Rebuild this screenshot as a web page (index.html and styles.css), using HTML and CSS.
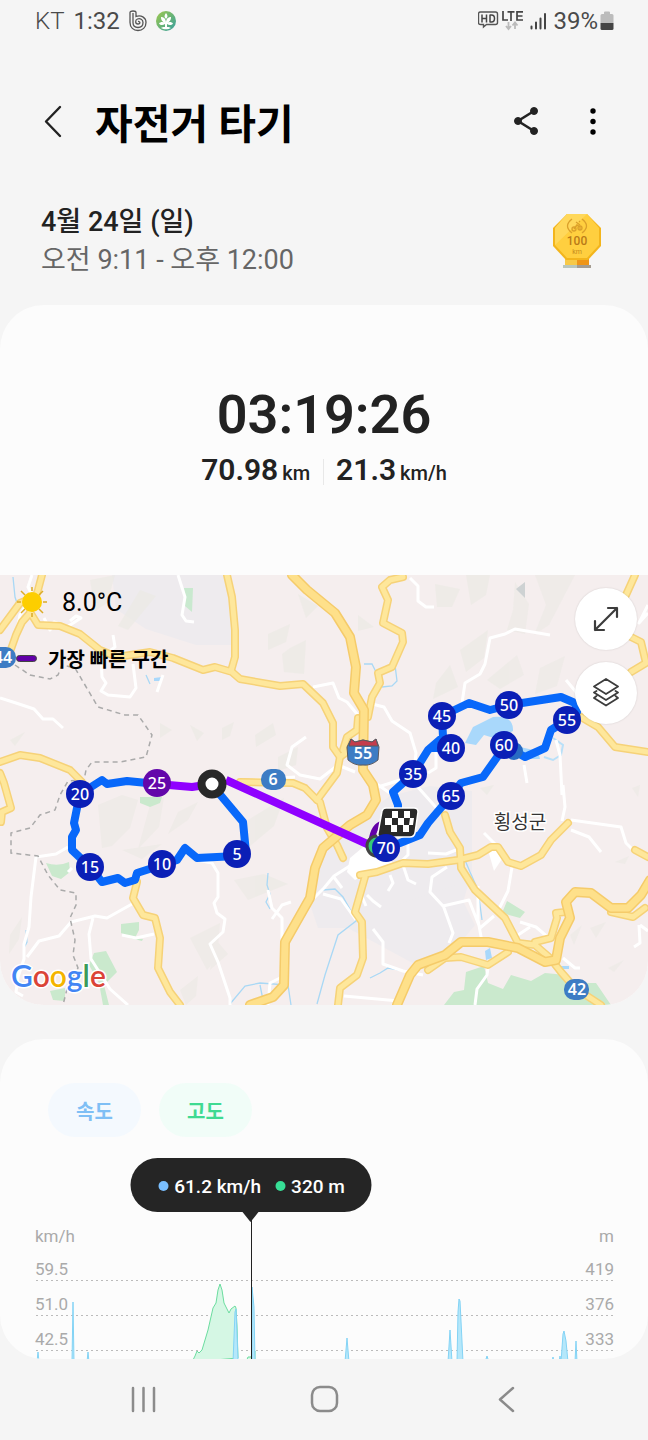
FILE: index.html
```html
<!DOCTYPE html>
<html lang="ko">
<head>
    <meta charset="UTF-8">
    <meta name="viewport" content="width=device-width, initial-scale=1.0">
    <title>자전거 타기</title>
    <link rel="stylesheet" href="styles.css">
</head>
<body>
    <div class="status-bar">
        <div class="status-left">
            <span class="carrier">KT</span>
            <span>1:32</span>
            <svg class="status-b" width="18" height="22" viewBox="0 0 18 22" fill="none" stroke="#555" stroke-width="1.3">
                <path d="M1 2.500c0-2 6-2 6 0v4c5-2 10 1 10 6 0 5-3.500 8-8 8s-8-3-8-8z"/>
                <path d="M4 3v9.500c0 3 2 5 5 5s5-2 5-5-3-4.500-5.500-3.500-2.500 5 .5 5 2-3 0-2.500"/>
            </svg>
            <svg width="20" height="20" viewBox="0 0 20 20">
                <defs>
                    <linearGradient id="leaf" x1="0" y1="0" x2="1" y2="1">
                        <stop offset="0" stop-color="#9fc94b"/>
                        <stop offset="1" stop-color="#359fa0"/>
                    </linearGradient>
                </defs>
                <circle cx="10" cy="10" r="10" fill="url(#leaf)"/>
                <path fill="#fff" d="M10 2c2 2.500 2 4 0 6-2-2-2-3.500 0-6zM10 12c0-4 2-6 5-6 .3 3-1.500 5-4 6 2-1.500 4.500-1.500 6 .5-1.500 2-4 2-6 .5v3c2 0 3 .5 4 1-3 1.800-7 1.800-10 0 1-.7 2-1 4-1v-3c-2 1.500-4.500 1.500-6-.5 1.500-2 4-2 6-.5-2.500-1-4.300-3-4-6 3 0 5 2 5 6z"/>
            </svg>
        </div>
        <div class="status-right">
            <svg width="46" height="22" viewBox="0 0 46 22">
                <path d="M2.500 2h15q2 0 2 2v8.500q0 2-2 2H8.500L5.500 17v-2.500h-3q-2 0-2-2V4q0-2 2-2z" fill="none" stroke="#555" stroke-width="1.400"/>
                <path d="M4 4.500v8M8.500 4.500v8M4 8.500h4.500M12 4.500v8M12 5h1.500q3 0 3 3.500t-3 3.500H12" fill="none" stroke="#444" stroke-width="1.500"/>
                <path d="M25 1v9h5M29.500 1.800h7M33 1.800V11M45 1.800h-6v8.200h6M39 6h5.500" fill="none" stroke="#444" stroke-width="1.700"/>
                <path d="M30.500 12v6M28 16l2.500 3 2.500-3M37 19v-6M34.500 15.500L37 12.500l2.500 3" fill="none" stroke="#bbb" stroke-width="1.800"/>
            </svg>
            <svg width="17" height="22" viewBox="0 0 17 22" stroke="#444" stroke-width="2" stroke-linecap="round">
                <path d="M1.500 16.500v2M6 12.500v6M10.500 8.500v10M15 4v14.500"/>
            </svg>
            <span class="battery-text">39%</span>
            <svg width="14" height="20" viewBox="0 0 14 20">
                <path d="M4 1.500q0-1 1-1h4q1 0 1 1V3h2q1.500 0 1.500 1.500V12H.5V4.500Q.5 3 2 3h2z" fill="#bcbcbc"/>
                <path d="M.5 12h13v5.500q0 1.500-1.500 1.500H2Q.5 19 .5 17.500z" fill="#444"/>
            </svg>
        </div>
    </div>

    <header class="app-bar">
        <button class="icon-btn" aria-label="뒤로">
            <svg width="20" height="34" viewBox="0 0 20 34" fill="none" stroke="#222" stroke-width="2.400" stroke-linecap="round" stroke-linejoin="round"><path d="M16 2L2 16.500 16 31"/></svg>
        </button>
        <h1>자전거 타기</h1>
        <button class="icon-btn" aria-label="공유">
            <svg width="26" height="30" viewBox="0 0 26 30" fill="#222" stroke="#222">
                <path d="M21 4L5 14l16 10" fill="none" stroke-width="2.600"/>
                <circle cx="21" cy="4" r="3.500"/><circle cx="5" cy="14" r="3.500"/><circle cx="21" cy="24" r="3.500"/>
            </svg>
        </button>
        <button class="icon-btn more" aria-label="더보기">
            <svg width="8" height="30" viewBox="0 0 8 30"><circle cx="4" cy="4" r="2.700"/><circle cx="4" cy="14.500" r="2.700"/><circle cx="4" cy="25" r="2.700"/></svg>
        </button>
    </header>

    <section class="summary">
        <div>
            <p class="date">4월 24일 (일)</p>
            <p class="period">오전 9:11 - 오후 12:00</p>
        </div>
        <svg class="badge" width="50" height="56" viewBox="0 0 50 56">
            <path d="M13 46h24v7H13z" fill="#f7c948"/><path d="M25 46h12v7H25z" fill="#ef9518"/>
            <path d="M11 52h14v3H11z" fill="#b9c6bd"/><path d="M25 52h14v3H25z" fill="#a49c91"/>
            <path d="M15 1h20l14 14v18L36 47H14L1 33V15z" fill="#f3b51c"/>
            <path d="M15 1h20l12 14v17L35 45H15L3 32V15z" fill="#ffcf3f"/>
            <path d="M15 1h20L3 32V15z" fill="#ffdc68" opacity=".7"/>
            <g fill="none" stroke="#dba02b" stroke-width="1.300">
                <path d="M20 6q-9 7 0 14M30 6q9 7 0 14"/>
                <path d="M22 16l3-4 3 2v3M24 9l4 3M27 8l1 1"/>
                <circle cx="22" cy="16" r="2"/><circle cx="28" cy="15" r="2"/>
            </g>
            <text x="25" y="32" font-size="12" font-weight="500" text-anchor="middle" fill="#b97a18">100</text>
            <text x="25" y="41" font-size="7" text-anchor="middle" fill="#c58b20">km</text>
        </svg>
    </section>

    <main>
        <section class="card">
            <div class="totals">
                <p class="duration">03:19:26</p>
                <div class="metrics">
                    <p><span>70.98</span><small>km</small></p>
                    <p><span>21.3</span><small>km/h</small></p>
                </div>
            </div>

            <div class="map">
                <svg class="map-canvas" viewBox="0 575 648 430">
                    <rect y="575" width="648" height="430" fill="#f5eeee"/>

                    <!-- terrain -->
                    <g fill="#eeebee">
                        <path d="M112 575h118l6 70-40 0-50-16-30-20z"/>
                        <path d="M322 850l28-24 40-30 40-10 42 5 0 80-20 70-34 25-70-38-30 0-10-30z"/>
                        <path d="M395 905l60-20 20 40-25 30-40-5z"/>
                    </g>
                    <g fill="#ebeae4" opacity=".6">
                        <path d="M90 580l25-5-8 28-12 8zM140 590l16 6-28 34-10-4zM290 648l16-8-2 34-20-2-2-18zM268 634l22-10-4 18-18 8zM298 594l20 12-12 12zM358 615l16 12-16 4z"/>
                        <path d="M435 584l25 5-8 18-15 0zM466 575h24l-4 20-15 10zM515 582l14 22-4 30-18-4 6-20zM535 575h40l-26 50-15 10 12-30zM460 650l28-20-4 28-18 14zM487 680l30-25 7 20-24 14zM540 668l25-12-8 30-22 8zM436 683l14-18 8 22-25 12z"/>
                        <path d="M10 740l15-8-10 14zM160 723l12 7-12 8zM190 725l14 8-7 8zM255 735l18-12 3 12-20 12zM222 728l12-6-4 14-8 4zM278 757l20-10-2 18-18 6z"/>
                        <path d="M98 805l24-10 16 5-8 28-18 18-10 2zM150 805l14-8-5 30-21 22zM178 812l20-10-10 18-20 14zM122 850l40-6-20 15zM248 820l36-22-10 28-36 30zM234 880l30-6 24 10-40 16zM10 935l12-18-3 22-10 15zM190 938l30-15-3 35-10 12zM180 990l18-14-2 20-10 9zM216 940l12 14-18 16z"/>
                        <path d="M480 788l14-3-7 10zM615 862l14-6-4 8zM590 928l16-6-10 16zM570 935l12-10-8 20zM608 968l16-8-10 12zM632 788l8-3-2 12z"/>
                    </g>
                    <path d="M516 589l9-7v16z" fill="#ced2d3"/>
                    <path d="M184 588l9 0-1 24-7-6z" fill="#c9e9cf"/>
                    <g fill="#cae9cd">
                        <path d="M46 863q12 4 23-1l1 10-9 7-9-3zM140 797h22l-2 6-10 4-10-4zM121 924l18-2 0 8-4 8 8 1-1 2-12-3-9-5zM94 953l12-2 11 21-13 13 5 20h-6l-4-22-10-18zM50 991l15-3 0 13-12-1zM507 901l18 11-5 6-18-5z"/>
                        <path d="M444 1005l10-13 10-2 2-18 18-6 4 17 15 6 8-14 20 6 14-8 21 2 10 8 20 0 15 22z"/>
                    </g>
                    <g fill="#a9d8fb">
                        <path d="M473 727l20-10q21-2 20 14l-16 8-13-4-8 10-11-2zM520 747l18 4 2 8-20 0z"/>
                        <path d="M485 951l5-3 2 10-6 2zM561 966h8v3h-8zM154 678l8-1-2 4h-6z"/>
                    </g>
                    <path d="M553 738l10 7-2 10-8 5-9-3" fill="none" stroke="#b9e0f8" stroke-width="2"/>
                    <g fill="none" stroke="#a9d8f5" stroke-width="1.300">
                        <path d="M13 577l2 20 4 12M364 664l8 0 4 8M395 665l2 16-5 5-10 1M146 675l4 9M268 873l-1 12 3 9-4 8 4 7M323 890l12-1 8 8 8 14 5 10-18 14-13 40-8 29M230 1004l15-18 15-3 28 2 3 20M260 985l3 15M26 930l1 12-3 6M465 860l5 12 8 18 4 30M370 978l10-5 8-5 12 2"/>
                    </g>

                    <!-- minor roads -->
                    <g class="road-minor">
                        <path d="M32 575l-4 12 4 8-12 20-3 15M44 618l6 12 4-8 13 5 14-9-5-2-6 5M178 575l7 22-3 18 4 6 8 1"/>
                        <path d="M0 698l16 5 18 6 9 10 10 0 10 9M113 635l2 12-14 10 1 20 4 6-5 8 7 4 22 2 6-9-3-24M163 675l-6 17"/>
                        <path d="M313 687l20-4 6 15 8 4 15 18M372 704l12 3 8 14 18 12 6 20-2 17-14 10-25 8M306 737l-14 10-5 18 13 10 20 4 18-14 17 7M250 780l45-3M410 578l8 8 0 15 8 6h8M462 703l3-20 15-9 5-10 5-26 15-4 10-5 35 6M566 680l10 12 4 12M648 605l-9 18 9-10"/>
                        <path d="M36 857l20-3 12-7M36 857l-5 40-2 30-5 17 0 15-6 18-2 15 7 4M27 957l12-16 20-5 12-14 24-6 12 2 25-14M93 918l-4 16 2 25 14 22 5 8 18 16M122 935l14 3 18-4M72 868l-4 4M197 860l15 3 6 10 0 24-4 6 3 10 8 6-2 13-13 12 8 18 12 36 0 7M268 890l4 18 10 10 0 60M272 919l10-14 9-3M268 1005l2-22 12-6"/>
                        <path d="M306 906l18-18 10-12 22-14M356 920l-15-21-18-5M333 876l9 12M376 873l-12 4-4 15 6 14M367 895l6 6 8 6M373 929l10 13 0 22 20 7 20 4M344 996l55 5M390 875l3 8-5 8M403 865l5 15 8 4M398 864l10-9 0-20"/>
                        <path d="M447 867l-15 10-2 15 13 14 26-6 11 28 14-12M443 905l10 28-4 10M478 886l0 34 4 22M512 867l-4 24-10 20M520 922l16 5 14 12M518 935l12-8M489 960l-2 15-10 14-2 16M428 853l18 1 10-4M484 833l12 12M563 785l2 22-3 14M571 820l50 7 5 16 6 6M571 830l18 7 12 15M639 925l1 18-6 4M640 925l8 6M563 958l12 10 5 0M556 740l4 15 2 40M524 765l3 18M436 750l0 18-8 5M416 785l25 28M374 782l20 14"/>
                    </g>
                    <path d="M350 858l18-15 20 15 10 10-28 4-15 8-8-8zM488 850l10-3 4 12-8 12z" fill="#fff"/>

                    <path class="border" d="M15 665L30 675 50 679 58 675 62 665 75 668 85 685 98 707 125 715 138 715 152 735 146 757 120 762 92 762 86 770 84 780 68 781 60 795 55 810 40 815 30 828 11 833 11 853 38 856 48 875 60 890 76 893 76 905 70 918 75 940 73 955 78 968 68 985 63 1005"/>

                    <!-- main roads: outline, then fill -->
                    <defs>
                        <g id="roads">
                            <path d="M0 630L20 603 32 598M42 575L38 590 33 605M30 613L22 622 16 635 10 652M30 612L38 625 60 626 80 634 100 650 117 657 150 652 173 658 203 670 215 667 232 672 240 679 280 686 303 684 323 703 333 723 333 747 340 757 337 773 317 800"/>
                            <path d="M340 757L347 752M343 750L347 737 357 730 358 718M227 575L232 597 235 630 235 657 231 671M403 577L390 580 382 587 388 600 383 623 402 633 403 642 392 667 378 673 380 683 372 697 368 717"/>
                            <path d="M240 782L293 783 305 788 317 800 320 802 327 828 337 845 343 858M360 875L377 872 403 863 428 864 458 860 478 855 491 847 498 847 508 862 521 866 541 855 551 840 568 823"/>
                            <path d="M365 877L355 912 362 922 363 958 357 975 340 988 338 1005M445 815L450 832 460 848 461 868 475 890 505 918 518 943 535 945 550 958 561 972 575 988 601 1005"/>
                            <path d="M428 970L445 958 461 957 488 965 508 952M535 942L551 938 557 918 556 913 565 912M611 912L633 917 645 908M635 850L648 857M635 575L626 595M631 637L641 642 646 663 631 672M581 717L598 727 615 747 648 752"/>
                            <path d="M0 762L20 755 40 758 70 770 82 782M0 773L4 783 11 808 2 812 1 822M137 882L133 898 143 915 155 918 160 938 158 968 170 992 180 1005"/>
                        </g>
                        <g id="highways">
                            <path d="M292 575L307 590 335 613 350 637 356 667 354 693 364 710 363 770 373 785 376 800 367 815 350 825 323 848 315 868 310 898 285 942 284 985 273 997 250 1005"/>
                            <path d="M397 1005L410 975 418 965 445 955 461 942 488 942 518 948 545 962 556 960 560 938 570 918 566 902 575 892 591 893 611 908 628 908 641 895 650 880"/>
                        </g>
                    </defs>
                    <use href="#roads" class="road-edge"/>
                    <use href="#roads" class="road-fill"/>
                    <use href="#highways" class="highway-edge"/>
                    <use href="#highways" class="highway-fill"/>

                    <!-- road numbers -->
                    <g class="shield">
                        <rect x="-10" y="647" width="26" height="21" rx="10"/><text x="3" y="663">44</text>
                        <rect x="261" y="769" width="25" height="21" rx="10"/><text x="273" y="785">6</text>
                        <rect x="564" y="979" width="25" height="21" rx="10"/><text x="577" y="995">42</text>
                        <path d="M351 739l4 3 8-2 9 2 4-3 3 8-1 13q-7 6-15 5-8 1-15-5l-1-13z" stroke="#5b5a60"/>
                        <path d="M351 739l4 3 8-2 9 2 4-3 2 7h-29z" fill="#c43c4c" stroke="#5b5a60"/>
                        <text x="363" y="759">55</text>
                    </g>
                    <text class="place" x="520" y="829">횡성군</text>

                    <!-- ride -->
                    <g class="route">
                        <path d="M212 785L243 822 246 853 237 856 197 858 185 848 177 860 162 865 137 873 135 880 125 883 118 878 102 882 90 867 72 850 72 837 76 830 74 823 77 808 80 794 102 780 107 784 127 781 157 784"/>
                        <path d="M398 812L398 805 393 792 413 774 428 750 443 737 442 716 469 703 490 710 509 705 561 697 575 703 577 712 567 720 551 730 545 748 525 757 505 746 483 777 461 783 451 796 428 823 420 835 400 843 386 848M430 748L451 748 455 760"/>
                        <path class="fastest" d="M157 784L192 787 212 784M226 780L376 848"/>
                    </g>
                    <circle cx="514" cy="751" r="9" fill="#286bc3"/>
                    <path d="M371 846q1-18 10-22" fill="none" stroke="#6200a8" stroke-width="6"/>
                    <circle cx="377" cy="846" r="10" fill="#35c978" stroke="#444" stroke-width="3"/>
                    <g transform="translate(379 807)">
                        <path d="M3 4q1-3 4-3h28q4 0 4 4l-3 21q-1 4-5 4H2q-4 0-3-4z" fill="#292929" stroke="#fff" stroke-width="1.500"/>
                        <path d="M13 4h6v7h-6zM25 4h6v7h-6zM6 11h7v7H6zM19 11h6v7h-6zM31 11h4l-1 7h-4zM12 18h6v7h-6zM24 18h6v7h-6z" fill="#fff"/>
                    </g>
                    <circle cx="212" cy="784" r="10.500" fill="#fff" stroke="#292929" stroke-width="8"/>
                    <g class="pins">
                        <circle cx="237" cy="854" r="14"/><text x="237" y="860">5</text>
                        <circle cx="162" cy="864" r="14"/><text x="162" y="870">10</text>
                        <circle cx="90" cy="867" r="14"/><text x="90" y="873">15</text>
                        <circle cx="80" cy="794" r="14"/><text x="80" y="800">20</text>
                        <circle cx="157" cy="783" r="14" fill="#6307aa"/><text x="157" y="789">25</text>
                        <circle cx="413" cy="774" r="14"/><text x="413" y="780">35</text>
                        <circle cx="451" cy="748" r="14"/><text x="451" y="754">40</text>
                        <circle cx="442" cy="716" r="14"/><text x="442" y="722">45</text>
                        <circle cx="509" cy="705" r="14"/><text x="509" y="711">50</text>
                        <circle cx="567" cy="720" r="14"/><text x="567" y="726">55</text>
                        <circle cx="504" cy="745" r="14"/><text x="504" y="751">60</text>
                        <circle cx="451" cy="796" r="14"/><text x="451" y="802">65</text>
                        <circle cx="386" cy="848" r="14"/><text x="386" y="854">70</text>
                    </g>
                    <text class="google" x="11" y="987"><tspan fill="#4285f4">G</tspan><tspan fill="#db4437">o</tspan><tspan fill="#f4b400">o</tspan><tspan fill="#4285f4">g</tspan><tspan fill="#3c9b58">l</tspan><tspan fill="#db4437">e</tspan></text>
                </svg>

                <div class="map-info">
                    <div class="info-row">
                        <svg width="32" height="32" viewBox="0 0 32 32">
                            <path d="M16 1v4M16 27v4M1 16h4M27 16h4M5 5l4 4M23 23l4 4M27 5l-4 4M9 23l-4 4" stroke="#dcab27" stroke-width="1.500"/>
                            <circle cx="16" cy="16" r="10" fill="#fdce00"/>
                        </svg>
                        <span class="temperature">8.0°C</span>
                    </div>
                    <div class="info-row">
                        <span class="fastest-key"></span>
                        <span class="fastest-label">가장 빠른 구간</span>
                    </div>
                </div>

                <div class="map-controls">
                    <button class="round-btn" aria-label="지도 확대">
                        <svg width="28" height="28" viewBox="0 0 28 28" fill="none" stroke="#3c3c3c" stroke-width="2.200" stroke-linecap="round" stroke-linejoin="round"><path d="M3 25L25 3M16 3h9v9M3 16v9h9"/></svg>
                    </button>
                    <button class="round-btn" aria-label="지도 유형">
                        <svg width="30" height="30" viewBox="0 0 30 30" fill="none" stroke="#3c3c3c" stroke-width="1.800" stroke-linejoin="round" stroke-linecap="round"><path d="M15 1l12 7.500-12 7.500L3 8.500zM5.500 13L3 14.500 15 22l12-7.500-2.500-1.500M5.500 18L3 20l12 7.500L27 20l-2.500-2"/></svg>
                    </button>
                </div>
            </div>
        </section>

        <section class="card chart-card">
            <div class="chips">
                <button class="chip speed">속도</button>
                <button class="chip altitude">고도</button>
            </div>
            <div class="chart">
                <svg class="chart-canvas" viewBox="0 0 648 201">
                    <g class="grid">
                        <path d="M36 122.500h578M36 157.500h578M36 192.500h578"/>
                    </g>
                    <path class="altitude-area" d="M192 204l3-6 2-5 2 2 3-3 6-20 5-22 3-5 2-13 2-6 2 6 2 13 5 10 2-4 4-3 1 2 1 18 1 32zM246 204l2-5 3 0 4-6v11z"/>
                    <g class="speed-area">
                        <path d="M37 204l1-10 1 10zM72 204l1-60 1 60zM87 204l1-10 1 10z"/>
                        <path d="M233 204l2-50 1-3 2 50zM252 204l0-75 2 20 1 55zM345 204l2-24 2 24zM448 204l2-32 2 32zM457 204l1-50 1-13 1 2 1 20 2 41zM485 204l2-6 2 6zM561 204l2-28 1-3 2 10 2 21zM575 204l1-21 1 21zM552 204l1-5 1 5zM559 204l1-6 1 6z"/>
                    </g>
                    <path d="M251.500 60v141" stroke="#222"/>
                    <g class="labels">
                        <text x="35" y="84">km/h</text>
                        <text x="35" y="117">59.5</text>
                        <text x="35" y="152">51.0</text>
                        <text x="35" y="187">42.5</text>
                        <g text-anchor="end">
                            <text x="614" y="84">m</text>
                            <text x="614" y="117">419</text>
                            <text x="614" y="152">376</text>
                            <text x="614" y="187">333</text>
                        </g>
                    </g>
                </svg>
                <div class="tooltip">
                    <span class="dot speed-dot"></span><span>61.2 km/h</span>
                    <span class="dot altitude-dot"></span><span>320 m</span>
                </div>
            </div>
        </section>
    </main>

    <nav class="nav-bar">
        <button class="icon-btn" aria-label="최근 앱">
            <svg width="28" height="30" viewBox="0 0 28 30" stroke="#8b8b8b" stroke-width="2.500" stroke-linecap="round"><path d="M4 4v23M14.500 4v23M25 4v23"/></svg>
        </button>
        <button class="icon-btn" aria-label="홈">
            <svg width="30" height="30" viewBox="0 0 30 30" fill="none" stroke="#8b8b8b" stroke-width="2.500"><rect x="3" y="3" width="25" height="24" rx="8"/></svg>
        </button>
        <button class="icon-btn" aria-label="뒤로">
            <svg width="20" height="30" viewBox="0 0 20 30" fill="none" stroke="#8b8b8b" stroke-width="2.500" stroke-linecap="round" stroke-linejoin="round"><path d="M18 4L5 15.500 18 27"/></svg>
        </button>
    </nav>
</body>
</html>
```
FILE: styles.css
```css
* {
    margin: 0;
    padding: 0;
    box-sizing: border-box;
}

body {
    font-family: Roboto, "Noto Sans CJK KR", sans-serif;
    background: #f5f5f5;
    color: #222;
}

svg {
    display: block;
    flex-shrink: 0;
}

button {
    border: none;
    background: none;
    font-family: inherit;
    cursor: pointer;
}

.status-bar {
    display: flex;
    justify-content: space-between;
    align-items: center;
    height: 42px;
    padding: 0 34px 0 35px;
    font-size: 24px;
    color: #4a4a4a;
}

.status-left,
.status-right {
    display: flex;
    align-items: center;
}

.status-left {
    gap: 9px;
}

.carrier {
    font-weight: 300;
}

.status-right {
    gap: 6px;
}

.battery-text {
    margin-right: -4px;
}

.app-bar {
    display: flex;
    align-items: center;
    height: 76px;
    margin-top: 42px;
    padding: 0 44px;
}

.app-bar h1 {
    flex: 1;
    margin-left: 31px;
    padding-top: 5px;
    font-size: 41px;
    line-height: 60px;
    font-weight: 700;
    color: #000;
}

.icon-btn {
    display: flex;
    justify-content: center;
    align-items: center;
}

.more {
    margin: 0 7px 0 50px;
}

.summary {
    display: flex;
    justify-content: space-between;
    align-items: center;
    height: 145px;
    padding: 16px 46px 0 41px;
    font-size: 27px;
    line-height: 38px;
}

.date {
    font-weight: 500;
}

.period {
    color: #666;
}

.card {
    background: #fcfcfc;
    border-radius: 44px;
    overflow: hidden;
}

.totals {
    height: 270px;
    padding-top: 78px;
    text-align: center;
}

.duration {
    font-size: 54px;
    line-height: 64px;
    font-weight: 600;
}

.metrics {
    display: flex;
    justify-content: center;
    align-items: center;
    margin-top: 6px;
    font-size: 30px;
    line-height: 34px;
    font-weight: 600;
}

.metrics p {
    display: flex;
    align-items: baseline;
    gap: 4px;
    padding: 0 13px;
}

.metrics p + p {
    background: linear-gradient(#e8e8e8, #e8e8e8) left center / 1px 26px no-repeat;
}

.metrics small {
    font-size: 20px;
    font-weight: 500;
}

.map {
    position: relative;
}

.map-canvas,
.chart-canvas {
    width: 100%;
}

.road-minor {
    fill: none;
    stroke: #fff;
    stroke-width: 3;
    stroke-linejoin: round;
}

.border {
    fill: none;
    stroke: #aaa;
    stroke-width: 1.5;
    stroke-dasharray: 5 4;
}

.road-edge,
.road-fill,
.highway-edge,
.highway-fill {
    fill: none;
    stroke-linejoin: round;
    stroke-linecap: round;
}

.road-edge {
    stroke: #f6d278;
    stroke-width: 8;
}

.road-fill {
    stroke: #fee79b;
    stroke-width: 5;
}

.highway-edge {
    stroke: #f5cb6a;
    stroke-width: 10;
}

.highway-fill {
    stroke: #fee08a;
    stroke-width: 7;
}

.shield {
    fill: #3d7cc4;
    font: 600 16px "Noto Sans", sans-serif;
    text-anchor: middle;
}

.shield text {
    fill: #fff;
}

.place {
    font-size: 19px;
    text-anchor: middle;
    fill: #333;
    stroke: #fff;
    stroke-width: 3;
    paint-order: stroke;
}

.route {
    fill: none;
    stroke: #0868fa;
    stroke-width: 8;
    stroke-linejoin: round;
}

.fastest {
    stroke: #9000ff;
}

.pins {
    fill: #0b1fb6;
    font: 500 16px "Noto Sans", sans-serif;
    text-anchor: middle;
}

.pins text {
    fill: #fff;
}

.google {
    font: 600 30px Lato, sans-serif;
    stroke: #fff;
    stroke-width: 3;
    paint-order: stroke;
}

.map-info {
    position: absolute;
    top: 11px;
    left: 16px;
}

.info-row {
    display: flex;
    align-items: center;
    height: 32px;
    color: #000;
}

.info-row + .info-row {
    margin-top: 24px;
}

.temperature {
    margin-left: 14px;
    font-size: 25px;
}

.fastest-key {
    width: 21px;
    height: 7px;
    border: 1px solid #444;
    border-radius: 4px;
    background: #6200a8;
}

.fastest-label {
    margin-left: 11px;
    font-size: 20px;
    font-weight: 700;
}

.map-controls {
    position: absolute;
    top: 13px;
    right: 11px;
    display: flex;
    flex-direction: column;
    gap: 12px;
}

.round-btn {
    display: flex;
    justify-content: center;
    align-items: center;
    width: 62px;
    height: 62px;
    border-radius: 50%;
    background: #fff;
    box-shadow: 0 0 2px rgba(0, 0, 0, 0.15);
}

.chart-card {
    margin-top: 34px;
    padding-top: 44px;
}

.chips {
    display: flex;
    gap: 18px;
    padding: 0 48px;
}

.chip {
    width: 93px;
    height: 54px;
    border-radius: 27px;
    font-size: 20px;
    font-weight: 700;
}

.speed {
    background: #f4f9fe;
    color: #7fbff5;
}

.altitude {
    background: #f1fdf8;
    color: #3fda92;
}

.chart {
    position: relative;
    margin-top: 21px;
}

.grid {
    stroke: #bbb;
    stroke-dasharray: 2 3;
}

.altitude-area {
    fill: #d5f7e4;
    stroke: #6bdc9f;
}

.speed-area {
    fill: #b5e7fa;
    stroke: #83d3f5;
}

.labels {
    font-size: 17px;
    fill: #aaa;
}

.tooltip {
    position: absolute;
    top: 0;
    left: 38.7%;
    display: flex;
    align-items: center;
    width: 241px;
    height: 54px;
    padding: 2px 0 0 28px;
    border-radius: 27px;
    background: #252525;
    color: #fff;
    font-size: 19px;
    font-weight: 500;
    white-space: nowrap;
    transform: translateX(-50%);
}

.tooltip::after {
    content: "";
    position: absolute;
    top: 100%;
    left: 50%;
    border: 8px solid transparent;
    border-top: 10px solid #252525;
    transform: translateX(-50%);
}

.dot {
    width: 10px;
    height: 10px;
    margin-right: 6px;
    border-radius: 50%;
}

.speed-dot {
    background: #7abfff;
}

.altitude-dot {
    margin-left: 14px;
    background: #37df96;
}

.nav-bar {
    display: grid;
    grid-template-columns: repeat(3, 1fr);
    align-items: center;
    height: 80px;
    padding: 0 52px;
}
```
